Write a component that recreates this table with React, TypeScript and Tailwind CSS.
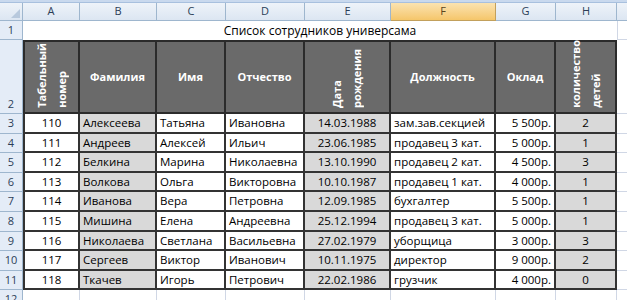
const cols = ['A', 'B', 'C', 'D', 'E', 'F', 'G', 'H']

const colHeadW = [
  'w-[57px]',
  'w-[77px]',
  'w-[69px]',
  'w-[79px]',
  'w-[86px]',
  'w-[105px]',
  'w-[60px]',
  'w-[61px]',
]

const cellCls = [
  'w-[57px] bg-white justify-center border-l-2',
  'w-[77px] bg-[#d9d9d9] justify-start pl-[3px]',
  'w-[69px] bg-white justify-start pl-[3px]',
  'w-[79px] bg-white justify-start pl-[3px]',
  'w-[86px] bg-[#d9d9d9] justify-center',
  'w-[105px] bg-white justify-start pl-[3px]',
  'w-[60px] bg-white justify-end pr-[3px]',
  'w-[61px] bg-[#d9d9d9] justify-center',
]

const rows = [
  ['110', 'Алексеева', 'Татьяна', 'Ивановна', '14.03.1988', 'зам.зав.секцией', '5 500р.', '2'],
  ['111', 'Андреев', 'Алексей', 'Ильич', '23.06.1985', 'продавец 3 кат.', '5 000р.', '1'],
  ['112', 'Белкина', 'Марина', 'Николаевна', '13.10.1990', 'продавец 2 кат.', '4 500р.', '3'],
  ['113', 'Волкова', 'Ольга', 'Викторовна', '10.10.1987', 'продавец 1 кат.', '4 000р.', '1'],
  ['114', 'Иванова', 'Вера', 'Петровна', '12.09.1985', 'бухгалтер', '5 500р.', '1'],
  ['115', 'Мишина', 'Елена', 'Андреевна', '25.12.1994', 'продавец 3 кат.', '5 000р.', '1'],
  ['116', 'Николаева', 'Светлана', 'Васильевна', '27.02.1979', 'уборщица', '3 000р.', '3'],
  ['117', 'Сергеев', 'Виктор', 'Иванович', '10.11.1975', 'директор', '9 000р.', '2'],
  ['118', 'Ткачев', 'Игорь', 'Петрович', '22.02.1986', 'грузчик', '4 000р.', '0'],
]

function RowNum({ n, className = '' }: { n: number; className?: string }) {
  return (
    <div
      className={`w-[23px] shrink-0 flex justify-center bg-[#e4ecf7] border-r border-b border-[#9eb6ce] text-[11px] text-[#2c3e57] ${className}`}
    >
      {n}
    </div>
  )
}

function Rotated({ lines }: { lines: string[] }) {
  return (
    <div className="[writing-mode:vertical-rl] rotate-180 text-left leading-[20px]">
      {lines.map((l) => (
        <div key={l}>{l}</div>
      ))}
    </div>
  )
}

export default function App() {
  return (
    <div className="w-[627px] h-[300px] overflow-hidden bg-white font-['Open_Sans',sans-serif] text-black">
      {/* верхняя полоска */}
      <div className="h-[3px] bg-[#c9d9ee] border-b border-[#a8c0de]" />

      {/* заголовки столбцов */}
      <div className="flex h-[18px]">
        <div className="w-[23px] shrink-0 relative bg-gradient-to-b from-[#eef3f9] to-[#dce6f2] border-r border-b border-[#9eb6ce]">
          <div className="absolute right-[2px] bottom-[2px] w-0 h-0 border-l-[9px] border-l-transparent border-b-[9px] border-b-[#b8c9dd]" />
        </div>
        {cols.map((c, i) => (
          <div
            key={c}
            className={`${colHeadW[i]} shrink-0 flex items-center justify-center text-[11px] border-r border-b ${
              c === 'F'
                ? 'bg-gradient-to-b from-[#fbe3b0] to-[#f5c66a] border-[#c2a05c] text-[#5a4520]'
                : 'bg-gradient-to-b from-[#eef3f9] to-[#dce6f2] border-[#9eb6ce] text-[#2c3e57]'
            }`}
          >
            {c}
          </div>
        ))}
        <div className="flex-1 bg-gradient-to-b from-[#eef3f9] to-[#dce6f2] border-b border-[#9eb6ce]" />
      </div>

      {/* строка 1 */}
      <div className="flex h-[19px]">
        <RowNum n={1} className="items-center" />
        <div className="w-[594px] shrink-0 flex items-center justify-center text-[12px]">
          Список сотрудников универсама
        </div>
        <div className="flex-1 border-l border-b border-[#d0d7e5]" />
      </div>

      {/* строка 2 — шапка таблицы */}
      <div className="flex h-[74px]">
        <RowNum n={2} className="items-end pb-[1px]" />
        <div className="flex text-white font-bold text-[11px] bg-[#6a6a6a]">
          <div className="w-[57px] flex items-end justify-center pb-[4px] border-2 border-[#2b2b2b]">
            <Rotated lines={['Табельный', 'номер']} />
          </div>
          {[
            ['w-[77px]', 'Фамилия'],
            ['w-[69px]', 'Имя'],
            ['w-[79px]', 'Отчество'],
          ].map(([w, t]) => (
            <div key={t} className={`${w} flex items-center justify-center border-y-2 border-r-2 border-[#2b2b2b]`}>
              {t}
            </div>
          ))}
          <div className="w-[86px] flex items-end justify-center pb-[4px] border-y-2 border-r-2 border-[#2b2b2b]">
            <Rotated lines={['Дата', 'рождения']} />
          </div>
          {[
            ['w-[105px]', 'Должность'],
            ['w-[60px]', 'Оклад'],
          ].map(([w, t]) => (
            <div key={t} className={`${w} flex items-center justify-center border-y-2 border-r-2 border-[#2b2b2b]`}>
              {t}
            </div>
          ))}
          <div className="w-[61px] flex items-end justify-center pb-[4px] border-y-2 border-r-2 border-[#2b2b2b]">
            <Rotated lines={['количество', 'детей']} />
          </div>
        </div>
        <div className="flex-1 border-b border-[#d0d7e5]" />
      </div>

      {/* строки данных */}
      {rows.map((r, ri) => (
        <div key={r[0]} className="flex h-[19.6px]">
          <RowNum n={ri + 3} className="items-center" />
          {r.map((v, ci) => (
            <div
              key={ci}
              className={`${cellCls[ci]} shrink-0 flex items-center text-[11.5px] leading-none border-r-2 border-b-2 border-[#333] whitespace-nowrap overflow-hidden`}
            >
              {v}
            </div>
          ))}
          <div className="flex-1 border-b border-[#d0d7e5]" />
        </div>
      ))}

      {/* строка 12 */}
      <div className="flex h-[20px]">
        <RowNum n={12} className="items-start pt-[1px]" />
        {colHeadW.map((w) => (
          <div key={w} className={`${w} shrink-0 border-r border-b border-[#d0d7e5]`} />
        ))}
        <div className="flex-1 border-b border-[#d0d7e5]" />
      </div>
    </div>
  )
}
